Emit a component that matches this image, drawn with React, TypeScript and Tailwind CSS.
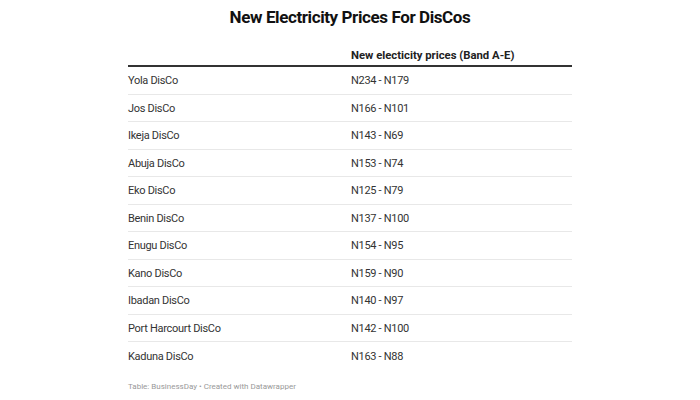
const rows = [
  ["Yola DisCo", "N234 - N179"],
  ["Jos DisCo", "N166 - N101"],
  ["Ikeja DisCo", "N143 - N69"],
  ["Abuja DisCo", "N153 - N74"],
  ["Eko DisCo", "N125 - N79"],
  ["Benin DisCo", "N137 - N100"],
  ["Enugu DisCo", "N154 - N95"],
  ["Kano DisCo", "N159 - N90"],
  ["Ibadan DisCo", "N140 - N97"],
  ["Port Harcourt DisCo", "N142 - N100"],
  ["Kaduna DisCo", "N163 - N88"],
];

const App = () => {
  return (
    <div className="w-[700px] h-[400px] bg-white font-['Roboto',sans-serif] overflow-hidden">
      <div className="w-[444px] mx-auto pt-[7px]">
        <h1 className="text-[17px] leading-[20px] font-bold tracking-[-0.4px] text-center text-[#111]">
          New Electricity Prices For DisCos
        </h1>

        {/* header */}
        <div className="flex mt-[21px] border-b-2 border-[#333] pb-[1px]">
          <div className="w-[223px]"></div>
          <div className="flex-1 text-[11.3px] leading-[16px] font-bold text-[#222]">
            New electicity prices (Band A-E)
          </div>
        </div>

        {/* rows */}
        {rows.map((r, i) => (
          <div
            key={r[0]}
            className={`flex items-center h-[27.5px] pt-[2px] text-[11px] tracking-[-0.3px] text-[#333] ${
              i < rows.length - 1 ? "border-b border-[#e8e8e8]" : ""
            }`}
          >
            <div className="w-[223px]">{r[0]}</div>
            <div className="flex-1">{r[1]}</div>
          </div>
        ))}

        <p className="mt-[12px] text-[8px] leading-[10px] text-[#999]">
          Table: BusinessDay • Created with Datawrapper
        </p>
      </div>
    </div>
  );
};

export default App;
